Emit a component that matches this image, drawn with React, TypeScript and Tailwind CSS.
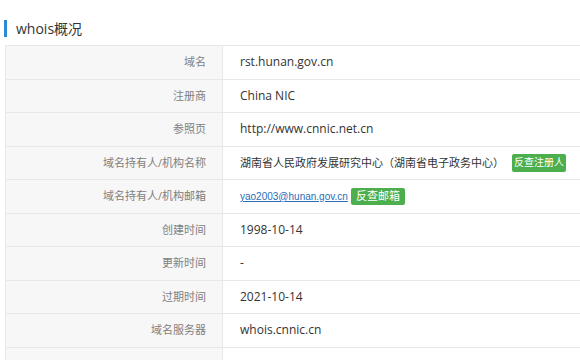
import React from "react";

const rows: { label: string; value: React.ReactNode }[] = [
  { label: "域名", value: "rst.hunan.gov.cn" },
  { label: "注册商", value: "China NIC" },
  { label: "参照页", value: "http://www.cnnic.net.cn" },
  {
    label: "域名持有人/机构名称",
    value: (
      <div className="flex items-center whitespace-nowrap">
        <span className="text-[11px]">湖南省人民政府发展研究中心（湖南省电子政务中心）</span>
        <span className="ml-[8px] inline-flex h-[18px] w-[54px] items-center justify-center rounded-[2px] bg-[#4cae4c] text-[10px] text-white">反查注册人</span>
      </div>
    ),
  },
  {
    label: "域名持有人/机构邮箱",
    value: (
      <div className="flex items-center whitespace-nowrap">
        <span className="inline-block w-[108px] overflow-hidden text-[10px] text-[#2b6cb8] underline" style={{ fontFamily: '"Liberation Sans", Arial, sans-serif' }}>yao2003@hunan.gov.cn</span>
        <span className="ml-[3px] inline-flex h-[17px] w-[54px] items-center justify-center rounded-[2px] bg-[#4cae4c] text-[11px] text-white">反查邮箱</span>
      </div>
    ),
  },
  { label: "创建时间", value: "1998-10-14" },
  { label: "更新时间", value: "-" },
  { label: "过期时间", value: "2021-10-14" },
  { label: "域名服务器", value: "whois.cnnic.cn" },
  { label: "", value: "" },
];

export default function App() {
  return (
    <div
      className="h-[360px] w-[580px] overflow-hidden bg-white"
      style={{ fontFamily: '"Open Sans", "Noto Sans CJK SC", sans-serif' }}
    >
      <div className="flex items-center pt-[20px] pl-[4px]">
        <div className="h-[17px] w-[3px] bg-[#2a8ad4]" />
        <div className="ml-[9px] text-[14px] leading-[17px] text-[#333]">whois概况</div>
      </div>
      <div className="ml-[5px] mt-[8px] border-t border-l border-[#e8e8e8]">
        {rows.map((r, i) => (
          <div key={i} className="flex h-[33.5px] border-b border-[#e8e8e8]">
            <div className="flex w-[217px] shrink-0 items-center justify-end whitespace-nowrap border-r border-[#e8e8e8] bg-[#f7f7f7] pr-[16px] text-[11px] text-[#808080]">
              {r.label}
            </div>
            <div className="flex flex-1 items-center pl-[17px] text-[12px] text-[#333]">{r.value}</div>
          </div>
        ))}
      </div>
    </div>
  );
}
